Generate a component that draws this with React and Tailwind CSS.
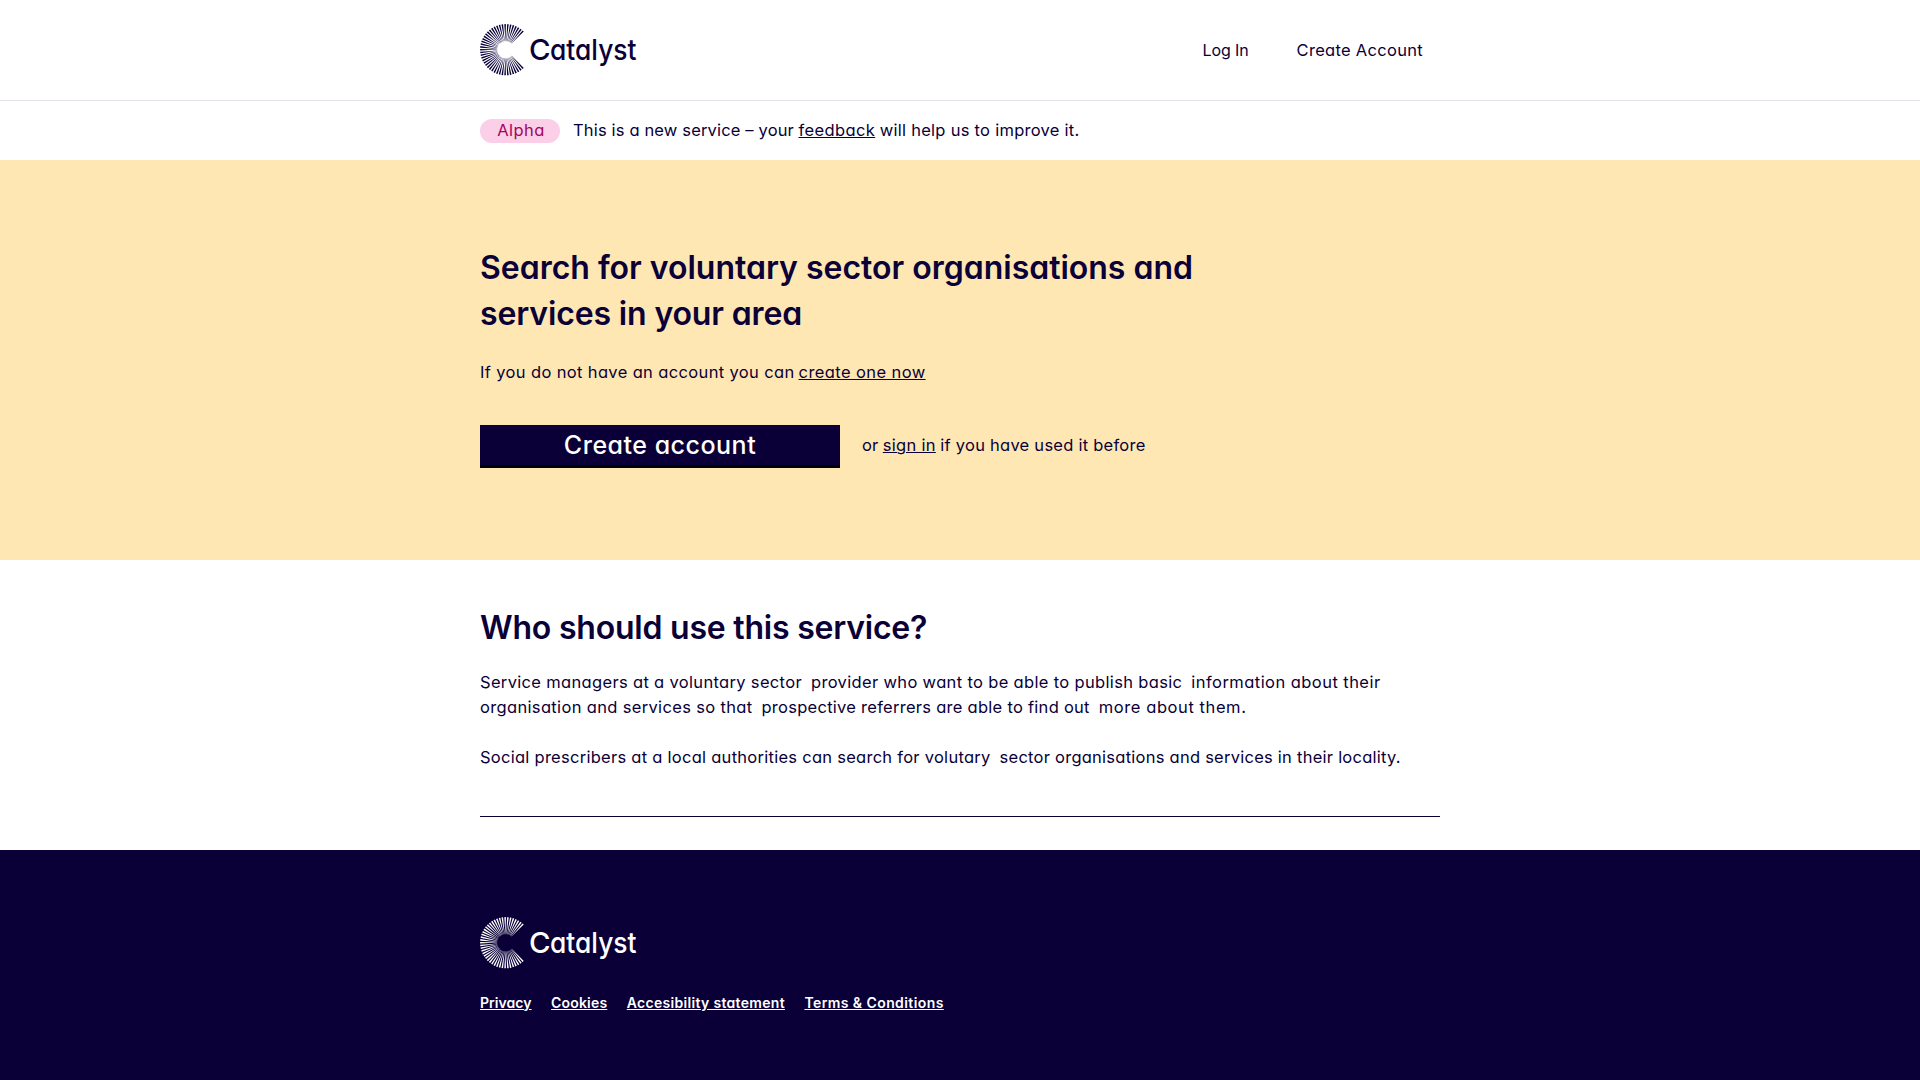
const RAYS = Array.from({ length: 43 }, (_, i) => 47 + (i * 266) / 42);

function ray(deg) {
  const a = (deg * Math.PI) / 180;
  const c = Math.cos(a);
  const s = -Math.sin(a);
  const at = (r, w) => `${(25.7 + r * c - w * s).toFixed(2)} ${(25.7 + r * s + w * c).toFixed(2)}`;
  return `M${at(25.6, 0.8)}L${at(25.6, -0.8)}L${at(17, -0.42)}L${at(8.5, -0.12)}L${at(8.5, 0.12)}L${at(17, 0.42)}Z`;
}

function Logo() {
  return (
    <svg width="160" height="52" viewBox="0 0 160 52" className="overflow-visible" fill="currentColor">
      <path d={RAYS.map(ray).join("")} />
      <text y="36.2" className="font-['Inter',sans-serif] text-[29px] leading-none font-medium">
        <tspan x="48.9" textLength="21.6" lengthAdjust="spacingAndGlyphs">C</tspan>
        <tspan x="70" textLength="86.5" lengthAdjust="spacingAndGlyphs">atalyst</tspan>
      </text>
    </svg>
  );
}

const link = "underline decoration-1 underline-offset-1";

export default function App() {
  return (
    <div className="min-h-screen bg-white font-['Inter',sans-serif] text-[16.5px] leading-[25px] text-[#0a0037] [font-feature-settings:'cv11'] whitespace-pre">
      <header className="h-[101px] border-b border-[#e2e2ea]">
        <div className="mx-auto flex h-full w-[960px] items-center justify-between pr-[17px]">
          <Logo />
          <nav className="flex gap-12">
            <a className="text-base tracking-[-0.1px]">Log In</a>
            <a className="tracking-[0.3px]">Create Account</a>
          </nav>
        </div>
      </header>

      <div className="mx-auto flex h-[59px] w-[960px] items-center">
        <span className="flex h-6 w-20 items-center justify-center rounded-full bg-[#fbcfe8] pl-[2px] tracking-[0.45px] text-[#a1045a]">
          Alpha
        </span>
        <p className="ml-[13px] flex">
          <span className="tracking-[0.16px]">This is a new service – your</span>
          <a className={`ml-[4.5px] tracking-[0.38px] ${link}`}>feedback</a>
          <span className="ml-[4.5px] tracking-[0.27px]">will help us to improve it.</span>
        </p>
      </div>

      <section className="h-[400px] bg-[#ffe7b3] pt-[85px]">
        <div className="mx-auto w-[960px]">
          <h1 className="text-[32px] leading-[46px] font-semibold">
            <span className="block tracking-[-0.01px]">Search for voluntary sector organisations and</span>
            <span className="block tracking-[-0.14px]">services in your area</span>
          </h1>
          <p className="mt-[23px] flex">
            <span className="tracking-[0.36px]">If you do not have an account you can</span>
            <a className={`ml-[4px] tracking-[0.41px] ${link}`}>create one now</a>
          </p>
          <div className="mt-10 flex items-center">
            <button className="h-[43px] w-[360px] border-b-3 border-black bg-[#0a0037] pt-px text-[25px] leading-[39px] font-medium tracking-[0.5px] text-white">
              Create account
            </button>
            <p className="mb-[2px] ml-[22px] flex">
              <span className="tracking-[0.1px]">or</span>
              <a className={`ml-[4.5px] tracking-[0.29px] ${link}`}>sign in</a>
              <span className="ml-[4.5px] tracking-[0.25px]">if you have used it before</span>
            </p>
          </div>
        </div>
      </section>

      <section className="mx-auto h-[290px] w-[960px] pt-[45px]">
        <h2 className="text-[32px] leading-[46px] font-semibold tracking-[-0.22px]">Who should use this service?</h2>
        <div className="mt-[19px]">
          <p className="flex gap-[9px]">
            <span className="tracking-[0.33px]">Service managers at a voluntary sector</span>
            <span className="tracking-[0.34px]">provider who want to be able to publish basic</span>
            <span className="tracking-[0.45px]">information about their</span>
          </p>
          <p className="flex gap-[9px]">
            <span className="tracking-[0.34px]">organisation and services so that</span>
            <span className="tracking-[0.27px]">prospective referrers are able to find out</span>
            <span className="tracking-[0.58px]">more about them.</span>
          </p>
          <p className="mt-[25px] flex gap-[9px]">
            <span className="tracking-[0.27px]">Social prescribers at a local authorities can search for volutary</span>
            <span className="tracking-[0.25px]">sector organisations and services in their locality.</span>
          </p>
        </div>
        <hr className="mt-[46px] border-[#0a0037]" />
      </section>

      <footer className="h-[230px] bg-[#0a0037] pt-[67px] text-white">
        <div className="mx-auto w-[960px]">
          <Logo />
          <nav className="mt-[21px] flex text-sm leading-[25px] font-semibold">
            <a className={`mr-[19.5px] tracking-[0.05px] ${link}`}>Privacy</a>
            <a className={`mr-[19.5px] tracking-[0.17px] ${link}`}>Cookies</a>
            <a className={`mr-[19.5px] tracking-[0.31px] ${link}`}>Accesibility statement</a>
            <a className={`tracking-[0.41px] ${link}`}>Terms &amp; Conditions</a>
          </nav>
        </div>
      </footer>
    </div>
  );
}
